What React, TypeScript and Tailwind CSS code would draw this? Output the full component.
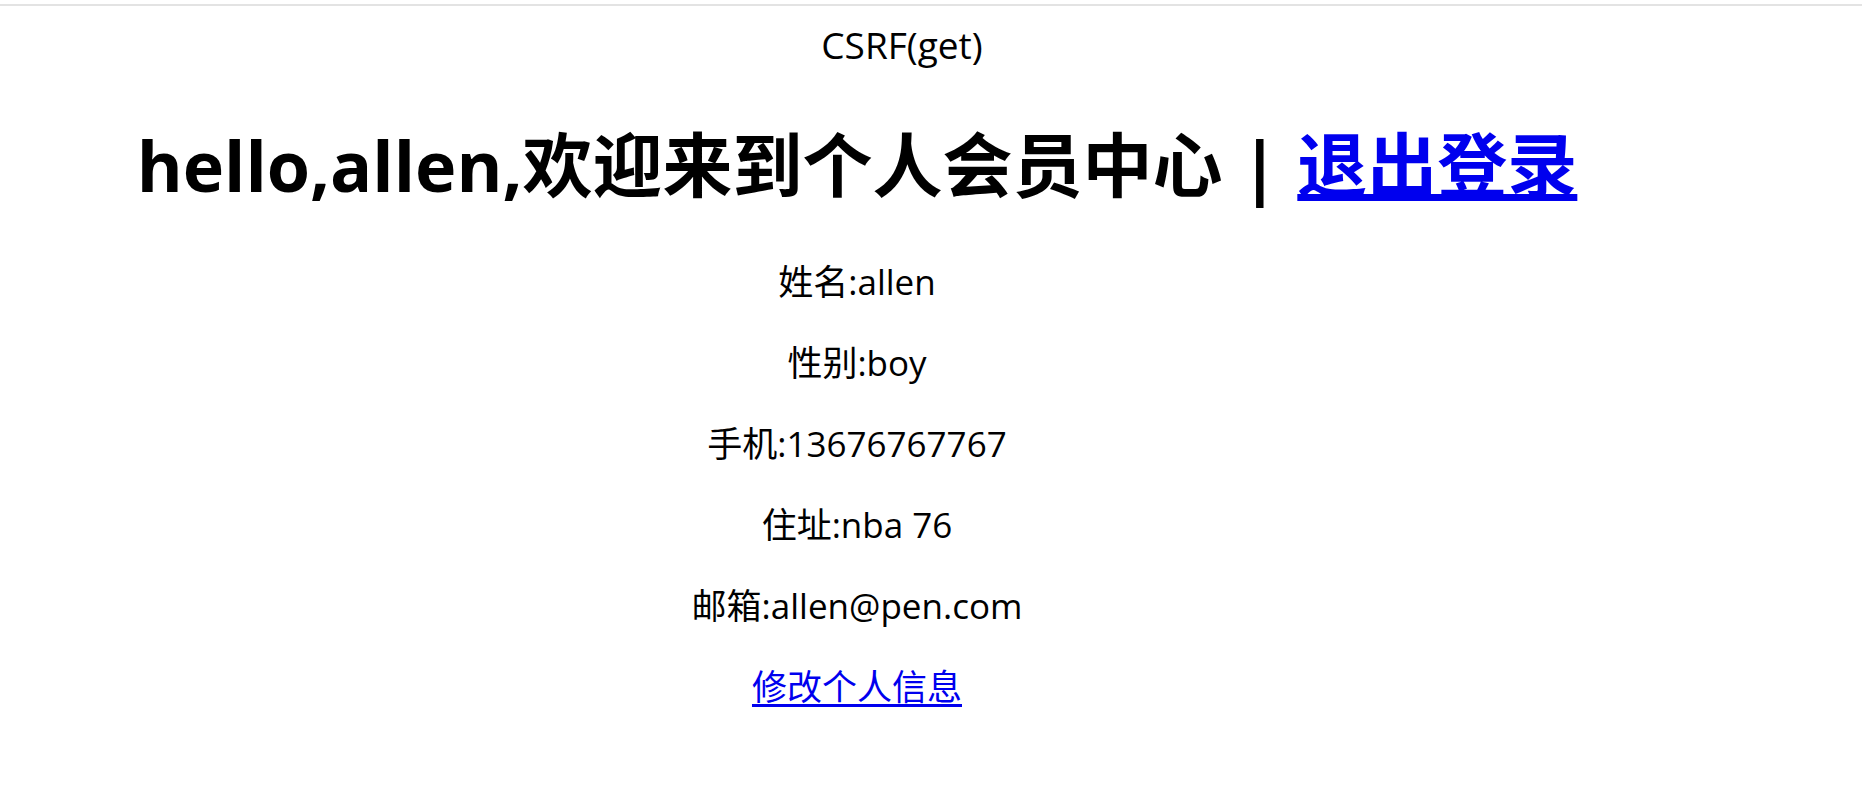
export default function App() {
  const font = { fontFamily: '"Open Sans", "Noto Sans CJK SC", sans-serif' };
  return (
    <div className="min-h-[808px] w-[1862px] bg-white text-black" style={font}>
      <div className="pt-[4px]">
        <div className="h-[2px] w-full bg-[#e3e3e3]" />
      </div>
      <div className="w-[1804px] pt-[14px] text-center text-[37px] leading-[50px]">CSRF(get)</div>
      <div className="w-[1714px] text-center">
        <h1 className="mt-[55px] text-[70px] font-bold leading-[80px] whitespace-nowrap">
          hello,allen,欢迎来到个人会员中心 |{' '}
          <a href="#" className="text-[#0000ee] underline decoration-[7px] underline-offset-[2px]">
            退出登录
          </a>
        </h1>
        <div className="mt-[37px] flex flex-col text-[35px] leading-[80.9px]">
          <p>姓名:allen</p>
          <p>性别:boy</p>
          <p>手机:13676767767</p>
          <p>住址:nba 76</p>
          <p>邮箱:allen@pen.com</p>
          <p>
            <a href="#" className="text-[#0000ee] underline decoration-[3px] underline-offset-[4px]">
              修改个人信息
            </a>
          </p>
        </div>
      </div>
    </div>
  );
}
